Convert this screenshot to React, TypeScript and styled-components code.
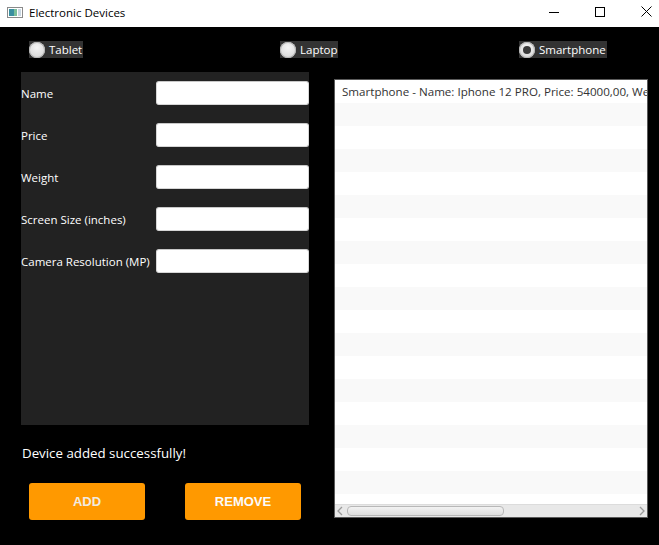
import React, { useState } from "react"
import styled, { createGlobalStyle } from "styled-components"

const GlobalStyle = createGlobalStyle`
  html, body {
    margin: 0;
    padding: 0;
    background: #000;
  }
  body {
    font-family: "Open Sans", "Noto Sans", sans-serif;
  }
  * {
    box-sizing: border-box;
  }
`

type Device = "Tablet" | "Laptop" | "Smartphone"

const fields = [
  "Name",
  "Price",
  "Weight",
  "Screen Size (inches)",
  "Camera Resolution (MP)",
]

const items = [
  "Smartphone - Name: Iphone 12 PRO, Price: 54000,00, Weight: 0,19, Screen Size: 6,1, Camera Resolution: 12",
]

const App: React.FC = () => {
  const [device, setDevice] = useState<Device>("Smartphone")
  const rows = Array.from({ length: 18 }, (_, i) => items[i] || "")

  return (
    <Window>
      <GlobalStyle />
      <TitleBar>
        <AppIcon viewBox="0 0 16 11">
          <rect x="0.5" y="0.5" width="15" height="10" fill="#fff" stroke="#8a8a8a" />
          <rect x="2" y="2" width="5" height="7" fill="#3a8fa0" />
          <rect x="7" y="2" width="3" height="7" fill="#7bbf9a" />
          <rect x="11" y="2" width="3" height="7" fill="#c9d7e2" />
        </AppIcon>
        <Title>Electronic Devices</Title>
        <Controls>
          <ControlButton>
            <svg width="10" height="10" viewBox="0 0 10 10">
              <path d="M0 5.5h10" stroke="#000" strokeWidth="1" />
            </svg>
          </ControlButton>
          <ControlButton>
            <svg width="10" height="10" viewBox="0 0 10 10">
              <rect x="0.5" y="0.5" width="9" height="9" fill="none" stroke="#000" />
            </svg>
          </ControlButton>
          <ControlButton>
            <svg width="11" height="11" viewBox="0 0 11 11">
              <path d="M0.5 0.5l10 10M10.5 0.5l-10 10" stroke="#000" strokeWidth="1" />
            </svg>
          </ControlButton>
        </Controls>
      </TitleBar>

      <Body>
        <RadioRow>
          {(["Tablet", "Laptop", "Smartphone"] as Device[]).map((d) => (
            <RadioLabel key={d} onClick={() => setDevice(d)}>
              <RadioCircle selected={device === d} />
              <span>{d}</span>
            </RadioLabel>
          ))}
        </RadioRow>

        <Main>
          <LeftColumn>
            <FormPanel>
              {fields.map((f) => (
                <FieldRow key={f}>
                  <FieldLabel>{f}</FieldLabel>
                  <FieldInput type="text" />
                </FieldRow>
              ))}
            </FormPanel>
            <Status>Device added successfully!</Status>
            <ButtonRow>
              <ActionButton>ADD</ActionButton>
              <ActionButton bright>REMOVE</ActionButton>
            </ButtonRow>
          </LeftColumn>

          <ListView>
            <ListRows>
              {rows.map((r, i) => (
                <ListRow key={i} odd={i % 2 === 1}>
                  {r}
                </ListRow>
              ))}
            </ListRows>
            <ScrollBar>
              <Arrow viewBox="0 0 6 10">
                <path d="M5 1L1 5l4 4" fill="none" stroke="#9a9a9a" strokeWidth="1.3" />
              </Arrow>
              <Track>
                <Thumb />
              </Track>
              <Arrow viewBox="0 0 6 10">
                <path d="M1 1l4 4-4 4" fill="none" stroke="#9a9a9a" strokeWidth="1.3" />
              </Arrow>
            </ScrollBar>
          </ListView>
        </Main>
      </Body>
    </Window>
  )
}

const Window = styled.div`
  width: 659px;
  height: 545px;
  background: #000;
  overflow: hidden;
`

const TitleBar = styled.div`
  height: 27px;
  background: #fff;
  display: flex;
  align-items: center;
  padding-left: 7px;
`

const AppIcon = styled.svg`
  width: 16px;
  height: 11px;
  margin-top: -2px;
`

const Title = styled.span`
  margin-left: 6px;
  margin-top: -3px;
  font-size: 11.5px;
  color: #000;
`

const Controls = styled.div`
  margin-left: auto;
  margin-right: -10px;
  display: flex;
  height: 100%;
`

const ControlButton = styled.div`
  width: 46px;
  height: 100%;
  display: flex;
  align-items: center;
  justify-content: center;
  padding-bottom: 4px;
`

const Body = styled.div`
  padding: 14px 0 0 21px;
`

const RadioRow = styled.div`
  display: grid;
  grid-template-columns: 251px 239px auto;
  padding-left: 8px;
  height: 17px;
`

const RadioLabel = styled.label`
  display: inline-flex;
  align-items: center;
  justify-self: start;
  gap: 4px;
  height: 17px;
  padding-right: 1px;
  background: #333;
  color: #fff;
  font-size: 11.5px;
  cursor: pointer;
`

const RadioCircle = styled.span<{ selected: boolean }>`
  width: 16px;
  height: 16px;
  border-radius: 50%;
  background: radial-gradient(circle at 50% 35%, #f4f4f4 0%, #dcdcdc 70%, #bdbdbd 100%);
  box-shadow: inset 0 0 0 1px #b5b5b5;
  display: flex;
  align-items: center;
  justify-content: center;
  &::after {
    content: "";
    width: 8px;
    height: 8px;
    border-radius: 50%;
    background: #3a3a3a;
    display: ${(p) => (p.selected ? "block" : "none")};
  }
`

const Main = styled.div`
  display: grid;
  grid-template-columns: 288px 314px;
  column-gap: 25px;
  margin-top: 14px;
`

const LeftColumn = styled.div`
  display: flex;
  flex-direction: column;
`

const FormPanel = styled.div`
  height: 353px;
  background: #222;
  padding-top: 9px;
  display: flex;
  flex-direction: column;
  gap: 18px;
`

const FieldRow = styled.div`
  display: grid;
  grid-template-columns: 135px 153px;
  align-items: center;
  height: 24px;
`

const FieldLabel = styled.span`
  color: #fff;
  font-size: 11.5px;
  white-space: nowrap;
`

const FieldInput = styled.input`
  height: 24px;
  width: 153px;
  border: 1px solid #d6d6d6;
  border-top-color: #c8c8c8;
  border-radius: 3px;
  background: #fff;
  outline: none;
  padding: 0 6px;
`

const Status = styled.div`
  margin-top: 19px;
  padding-left: 1px;
  color: #fff;
  font-size: 13.3px;
  line-height: 18px;
`

const ButtonRow = styled.div`
  display: flex;
  gap: 40px;
  padding-left: 8px;
  margin-top: 21px;
`

const ActionButton = styled.button<{ bright?: boolean }>`
  width: 116px;
  height: 37px;
  border: none;
  border-radius: 3px;
  background: #ff9900;
  color: ${(p) => (p.bright ? "#fafafa" : "#f1ebe0")};
  font-family: "Liberation Sans", Arial, sans-serif;
  font-weight: bold;
  font-size: 13px;
  cursor: pointer;
`

const ListView = styled.div`
  margin-top: 7px;
  height: 439px;
  border: 1px solid #5a5a5a;
  background: #fff;
  display: flex;
  flex-direction: column;
  overflow: hidden;
`

const ListRows = styled.div`
  flex: 1;
  overflow: hidden;
`

const ListRow = styled.div<{ odd: boolean }>`
  height: 23px;
  line-height: 23px;
  padding-left: 7px;
  white-space: nowrap;
  font-size: 11.6px;
  color: #333;
  background: ${(p) => (p.odd ? "#f9f9f9" : "#fff")};
`

const ScrollBar = styled.div`
  height: 13px;
  flex-shrink: 0;
  background: #e8e8e8;
  border-top: 1px solid #dcdcdc;
  display: flex;
  align-items: center;
  padding: 0 2px;
`

const Arrow = styled.svg`
  width: 6px;
  height: 10px;
  flex-shrink: 0;
`

const Track = styled.div`
  flex: 1;
  height: 100%;
  padding: 1px 4px 1px 4px;
`

const Thumb = styled.div`
  width: 157px;
  height: 100%;
  border-radius: 4px;
  border: 1px solid #b8b8b8;
  background: linear-gradient(#f2f2f2, #dedede);
`

export default App
